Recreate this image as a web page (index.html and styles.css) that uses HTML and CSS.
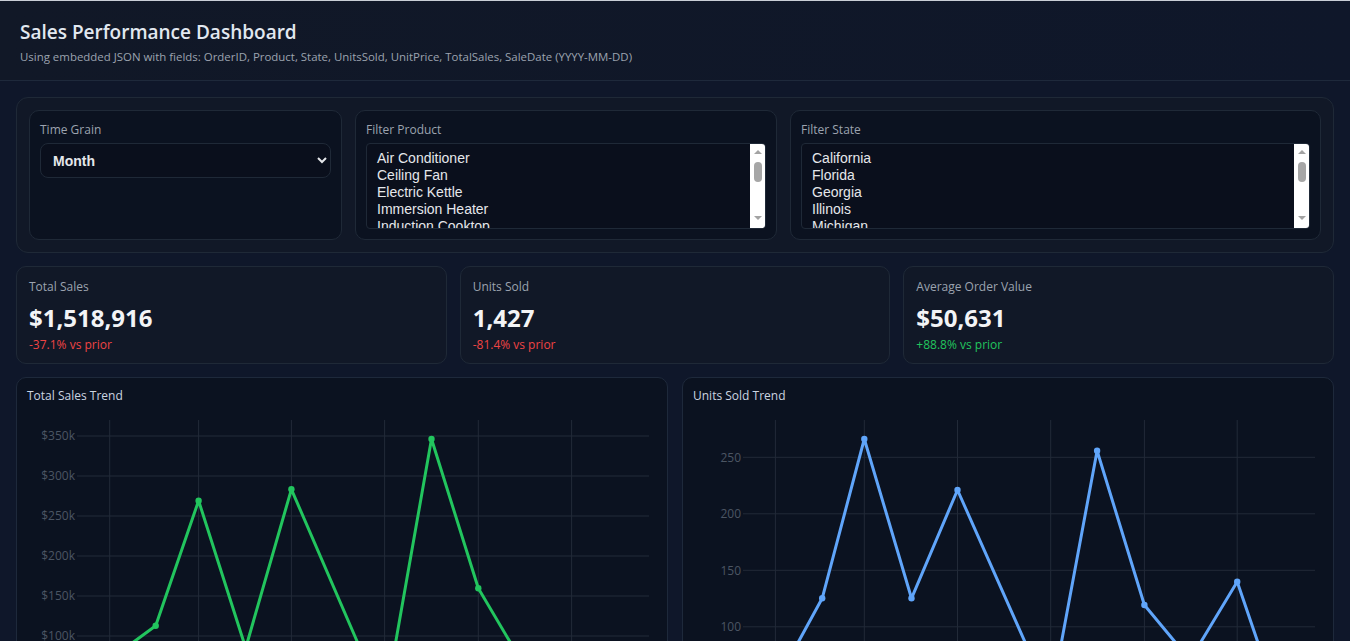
FILE: index.html
```html
<!DOCTYPE html>
<html lang="en">
<head>
<meta charset="utf-8">
<title>Sales Performance Dashboard</title>
<link rel="stylesheet" href="styles.css">
</head>
<body>
<header class="header">
  <h1 class="title">Sales Performance Dashboard</h1>
  <p class="subtitle">Using embedded JSON with fields: OrderID, Product, State, UnitsSold, UnitPrice, TotalSales, SaleDate (YYYY-MM-DD)</p>
</header>
<main class="main">
  <section class="filters">
    <div class="filter-card">
      <label class="filter-label" for="grain">Time Grain</label>
      <select id="grain" class="select-single">
        <option>Month</option>
        <option>Quarter</option>
        <option>Year</option>
      </select>
    </div>
    <div class="filter-card">
      <label class="filter-label" for="product">Filter Product</label>
      <div class="listbox">
        <select id="product" class="select-multi" multiple>
          <option>Air Conditioner</option>
          <option>Ceiling Fan</option>
          <option>Electric Kettle</option>
          <option>Immersion Heater</option>
          <option>Induction Cooktop</option>
          <option>Iron</option>
          <option>LED TV</option>
          <option>Microwave Oven</option>
          <option>Mixer Grinder</option>
          <option>Refrigerator</option>
          <option>Room Heater</option>
          <option>Table Fan</option>
          <option>Toaster</option>
          <option>Washing Machine</option>
          <option>Water Purifier</option>
        </select>
        <div class="scrollbar" aria-hidden="true">
          <span class="arrow-up"></span>
          <span class="thumb"></span>
          <span class="arrow-down"></span>
        </div>
      </div>
    </div>
    <div class="filter-card">
      <label class="filter-label" for="state">Filter State</label>
      <div class="listbox">
        <select id="state" class="select-multi" multiple>
          <option>California</option>
          <option>Florida</option>
          <option>Georgia</option>
          <option>Illinois</option>
          <option>Michigan</option>
          <option>Minnesota</option>
          <option>Nevada</option>
          <option>New Jersey</option>
          <option>New York</option>
          <option>North Carolina</option>
          <option>Ohio</option>
          <option>Oregon</option>
          <option>Pennsylvania</option>
          <option>Texas</option>
          <option>Virginia</option>
          <option>Washington</option>
        </select>
        <div class="scrollbar" aria-hidden="true">
          <span class="arrow-up"></span>
          <span class="thumb"></span>
          <span class="arrow-down"></span>
        </div>
      </div>
    </div>
  </section>

  <section class="kpis">
    <div class="kpi-card">
      <div class="kpi-label">Total Sales</div>
      <div class="kpi-value">$1,518,916</div>
      <div class="kpi-delta down">-37.1% vs prior</div>
    </div>
    <div class="kpi-card">
      <div class="kpi-label">Units Sold</div>
      <div class="kpi-value">1,427</div>
      <div class="kpi-delta down">-81.4% vs prior</div>
    </div>
    <div class="kpi-card">
      <div class="kpi-label">Average Order Value</div>
      <div class="kpi-value">$50,631</div>
      <div class="kpi-delta up">+88.8% vs prior</div>
    </div>
  </section>

  <section class="charts">
    <div class="chart-card">
      <div class="chart-title">Total Sales Trend</div>
      <svg class="chart" width="630" height="360" viewBox="0 0 630 360">
        <g class="grid">
          <line x1="82.7" y1="16" x2="82.7" y2="336"/>
          <line x1="171.6" y1="16" x2="171.6" y2="336"/>
          <line x1="264.4" y1="16" x2="264.4" y2="336"/>
          <line x1="357.6" y1="16" x2="357.6" y2="336"/>
          <line x1="451.3" y1="16" x2="451.3" y2="336"/>
          <line x1="544.6" y1="16" x2="544.6" y2="336"/>
          <line x1="50" y1="32" x2="622" y2="32"/>
          <line x1="50" y1="72" x2="622" y2="72"/>
          <line x1="50" y1="112" x2="622" y2="112"/>
          <line x1="50" y1="152" x2="622" y2="152"/>
          <line x1="50" y1="192" x2="622" y2="192"/>
          <line x1="50" y1="232" x2="622" y2="232"/>
          <line x1="50" y1="272" x2="622" y2="272"/>
          <line x1="50" y1="312" x2="622" y2="312"/>
        </g>
        <g class="axis-labels">
          <text x="48" y="36">$350k</text>
          <text x="48" y="76">$300k</text>
          <text x="48" y="116">$250k</text>
          <text x="48" y="156">$200k</text>
          <text x="48" y="196">$150k</text>
          <text x="48" y="236">$100k</text>
          <text x="48" y="276">$50k</text>
          <text x="48" y="316">$0</text>
        </g>
        <polyline class="line-green" points="82.7,255.5 128.7,221.7 171.6,96.7 218.7,244 264.4,85.3 357.6,301 404.5,35 451.3,184.3 497,261.5 544.6,250 590.5,290"/>
        <g class="dots-green">
          <circle cx="82.7" cy="255.5" r="3.2"/>
          <circle cx="128.7" cy="221.7" r="3.2"/>
          <circle cx="171.6" cy="96.7" r="3.2"/>
          <circle cx="218.7" cy="244" r="3.2"/>
          <circle cx="264.4" cy="85.3" r="3.2"/>
          <circle cx="357.6" cy="301" r="3.2"/>
          <circle cx="404.5" cy="35" r="3.2"/>
          <circle cx="451.3" cy="184.3" r="3.2"/>
          <circle cx="497" cy="261.5" r="3.2"/>
          <circle cx="544.6" cy="250" r="3.2"/>
          <circle cx="590.5" cy="290" r="3.2"/>
        </g>
      </svg>
    </div>
    <div class="chart-card">
      <div class="chart-title">Units Sold Trend</div>
      <svg class="chart" width="630" height="360" viewBox="0 0 630 360">
        <g class="grid">
          <line x1="82.4" y1="16" x2="82.4" y2="336"/>
          <line x1="171.3" y1="16" x2="171.3" y2="336"/>
          <line x1="264.5" y1="16" x2="264.5" y2="336"/>
          <line x1="357.7" y1="16" x2="357.7" y2="336"/>
          <line x1="451.4" y1="16" x2="451.4" y2="336"/>
          <line x1="544.2" y1="16" x2="544.2" y2="336"/>
          <line x1="50" y1="53.3" x2="622" y2="53.3"/>
          <line x1="50" y1="109.8" x2="622" y2="109.8"/>
          <line x1="50" y1="166.3" x2="622" y2="166.3"/>
          <line x1="50" y1="222.8" x2="622" y2="222.8"/>
          <line x1="50" y1="279.3" x2="622" y2="279.3"/>
          <line x1="50" y1="335.8" x2="622" y2="335.8"/>
        </g>
        <g class="axis-labels">
          <text x="48" y="57.5">250</text>
          <text x="48" y="114">200</text>
          <text x="48" y="170.5">150</text>
          <text x="48" y="227">100</text>
          <text x="48" y="283.5">50</text>
          <text x="48" y="340">0</text>
        </g>
        <polyline class="line-blue" points="82.4,280 129.2,194.3 171.3,35 218.5,194.3 264.5,86 357.7,296 404.1,46.7 451.4,201 497,256 544.2,177.7 590,312"/>
        <g class="dots-blue">
          <circle cx="82.4" cy="280" r="3.2"/>
          <circle cx="129.2" cy="194.3" r="3.2"/>
          <circle cx="171.3" cy="35" r="3.2"/>
          <circle cx="218.5" cy="194.3" r="3.2"/>
          <circle cx="264.5" cy="86" r="3.2"/>
          <circle cx="357.7" cy="296" r="3.2"/>
          <circle cx="404.1" cy="46.7" r="3.2"/>
          <circle cx="451.4" cy="201" r="3.2"/>
          <circle cx="497" cy="256" r="3.2"/>
          <circle cx="544.2" cy="177.7" r="3.2"/>
          <circle cx="590" cy="312" r="3.2"/>
        </g>
      </svg>
    </div>
  </section>
</main>
</body>
</html>
```

FILE: styles.css
```css
* { box-sizing: border-box; }

html, body {
  margin: 0;
  padding: 0;
}

body {
  background: #0f172a;
  color: #e5e7eb;
  font-family: "Open Sans", "Noto Sans", sans-serif;
}

.header {
  border-top: 1px solid #c9ced6;
  background: linear-gradient(90deg, #111827, #0f172a);
  border-bottom: 1px solid #1e293b;
  padding: 17px 20px 15px;
}

.title {
  margin: 0 0 3px;
  font-size: 19px;
  line-height: 28px;
  font-weight: 600;
  color: #e2e8f0;
}

.subtitle {
  margin: 0;
  font-size: 11.45px;
  line-height: 16px;
  color: #9ca3af;
}

.main {
  padding: 16px;
  display: flex;
  flex-direction: column;
  gap: 13px;
}

.filters {
  background: #111827;
  border: 1px solid #1f2937;
  border-radius: 12px;
  padding: 12px;
  display: grid;
  grid-template-columns: 313fr 422fr 531fr;
  gap: 13px;
}

.filter-card {
  background: #0b1220;
  border: 1px solid #1f2937;
  border-radius: 10px;
  padding: 10px;
  display: flex;
  flex-direction: column;
}

.filter-label {
  font-size: 12px;
  line-height: 18px;
  color: #9ca3af;
  margin-bottom: 4px;
}

.select-single {
  height: 35px;
  background: #0a0f1c;
  color: #e5e7eb;
  border: 1px solid #1f2937;
  border-radius: 8px;
  padding: 0 8px;
  font-family: "Liberation Sans", Arial, sans-serif;
  font-size: 14px;
  font-weight: 700;
}

.listbox {
  display: flex;
  height: 86px;
  background: #0a0f1c;
  border: 1px solid #1f2937;
  border-radius: 4px;
  overflow: hidden;
}

.select-multi {
  flex: 1;
  min-width: 0;
  height: 100%;
  background: transparent;
  color: #e5e7eb;
  border: none;
  outline: none;
  padding: 6px 8px;
  font-family: "Liberation Sans", Arial, sans-serif;
  font-size: 14px;
  overflow: hidden;
  scrollbar-width: none;
}

.scrollbar {
  width: 15px;
  flex: none;
  background: #ffffff;
  display: flex;
  flex-direction: column;
  align-items: center;
  padding: 6px 0 8px;
}

.arrow-up {
  width: 0;
  height: 0;
  border-left: 4px solid transparent;
  border-right: 4px solid transparent;
  border-bottom: 4px solid #a3a3a3;
}

.thumb {
  width: 8px;
  height: 20px;
  margin-top: 8px;
  border-radius: 4px;
  background: #a6a6a6;
}

.arrow-down {
  margin-top: auto;
  width: 0;
  height: 0;
  border-left: 4px solid transparent;
  border-right: 4px solid transparent;
  border-top: 4px solid #a3a3a3;
}

.kpis {
  display: grid;
  grid-template-columns: repeat(3, 1fr);
  gap: 13px;
}

.kpi-card {
  background: #111827;
  border: 1px solid #1f2937;
  border-radius: 10px;
  padding: 12px 12px 10px;
}

.kpi-label {
  font-size: 12px;
  line-height: 16px;
  color: #9ca3af;
}

.kpi-value {
  margin-top: 7px;
  font-size: 24px;
  line-height: 32px;
  font-weight: 700;
  color: #f3f4f6;
}

.kpi-delta {
  margin-top: 3px;
  font-size: 12px;
  line-height: 16px;
}

.kpi-delta.down { color: #ef4444; }
.kpi-delta.up { color: #22c55e; }

.charts {
  display: grid;
  grid-template-columns: repeat(2, 1fr);
  gap: 14px;
}

.chart-card {
  background: #0b1220;
  border: 1px solid #1e293b;
  border-radius: 10px;
  padding: 10px;
}

.chart-title {
  font-size: 12px;
  line-height: 16px;
  color: #cbd5e1;
}

.chart {
  display: block;
  width: 100%;
  height: 360px;
}

.grid line {
  stroke: #222a38;
  stroke-width: 1;
}

.axis-labels text {
  fill: #4b5563;
  font-family: "Open Sans", "Noto Sans", sans-serif;
  font-size: 12px;
  text-anchor: end;
}

.line-green {
  fill: none;
  stroke: #22c55e;
  stroke-width: 3;
  stroke-linejoin: round;
}

.dots-green circle { fill: #22c55e; }

.line-blue {
  fill: none;
  stroke: #60a5fa;
  stroke-width: 3;
  stroke-linejoin: round;
}

.dots-blue circle { fill: #60a5fa; }
```
